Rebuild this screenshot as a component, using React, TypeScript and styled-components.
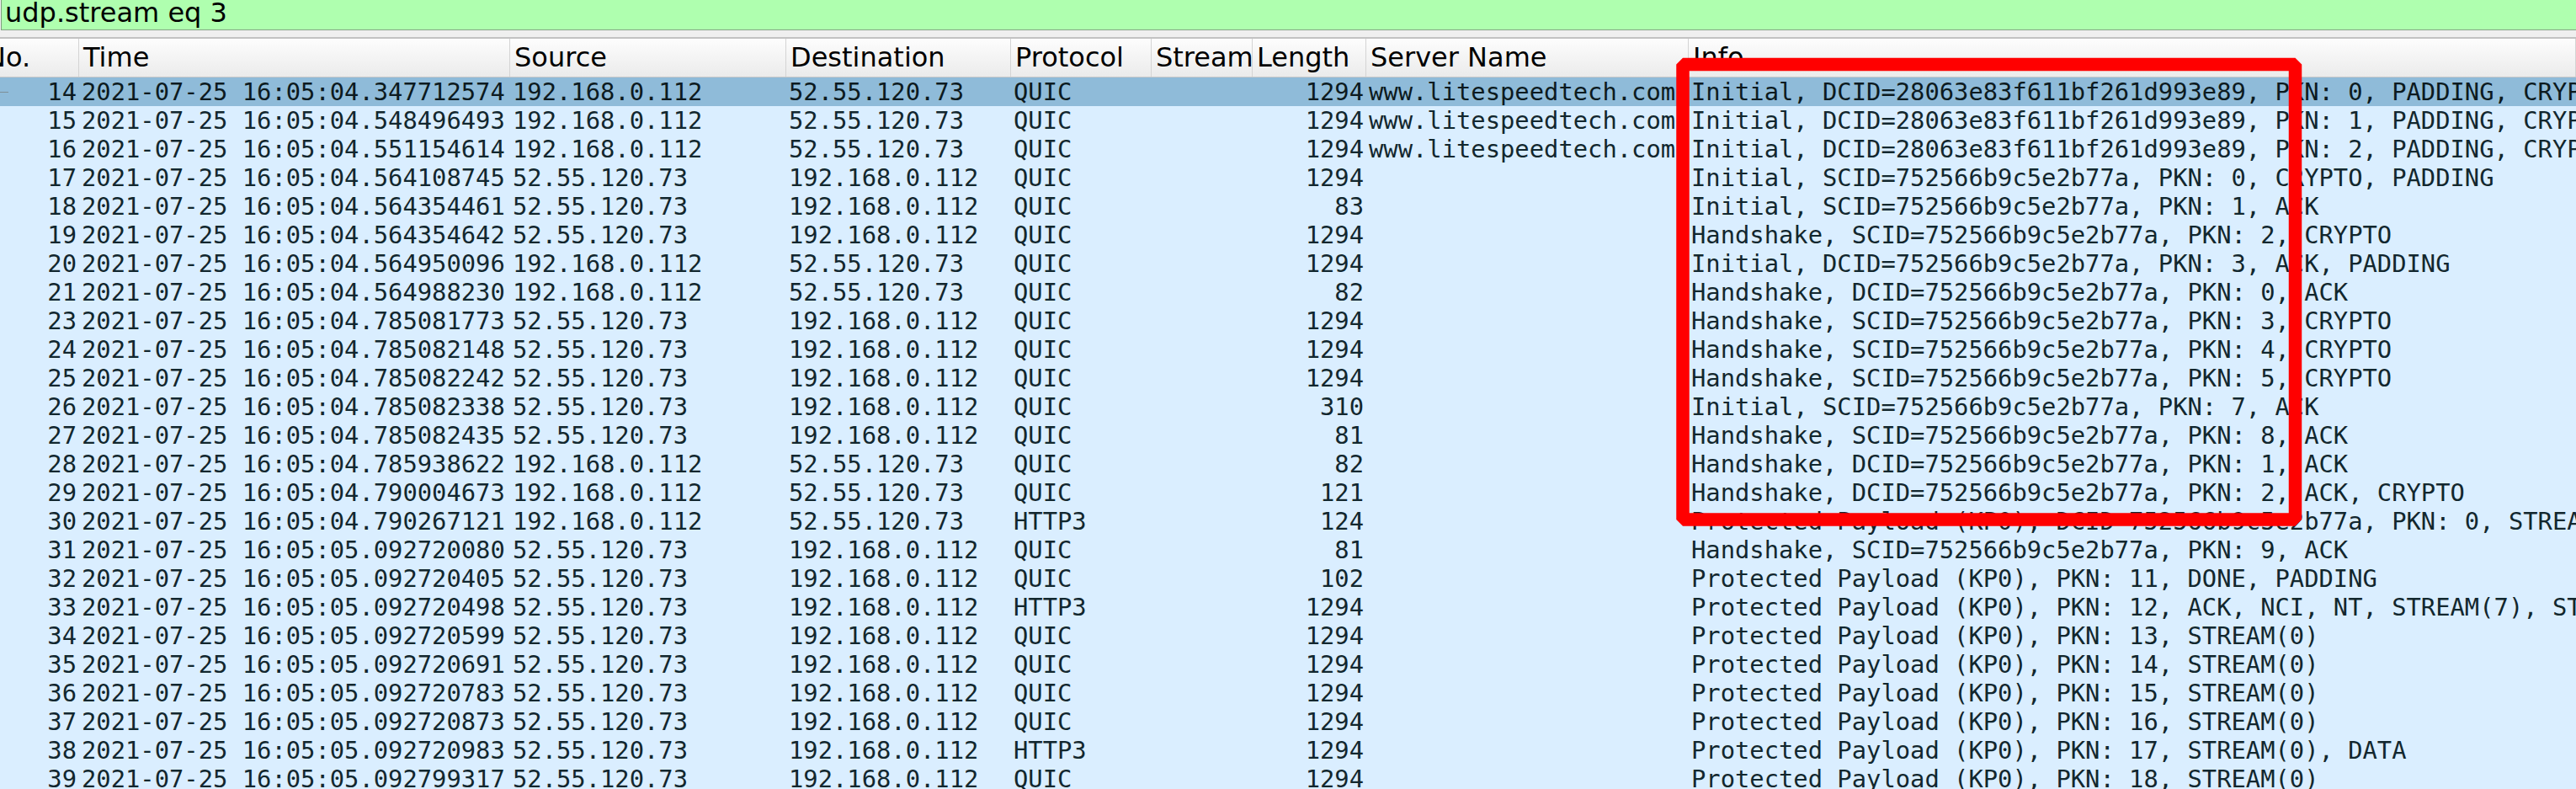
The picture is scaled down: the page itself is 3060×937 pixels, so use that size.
import styled, { createGlobalStyle } from 'styled-components';

interface Packet {
  no: number;
  time: string;
  src: string;
  dst: string;
  proto: string;
  len: number;
  server?: string;
  info: string;
}

const CLIENT = '192.168.0.112';
const PEER = '52.55.120.73';
const SNI = 'www.litespeedtech.com';
const DCID0 = '28063e83f611bf261d993e89';
const CID = '752566b9c5e2b77a';
const KP0 = 'Protected Payload (KP0)';

const out = (no: number, time: string, proto: string, len: number, info: string, server?: string): Packet => ({
  no, time: `2021-07-25 16:05:${time}`, src: CLIENT, dst: PEER, proto, len, info, server,
});
const inc = (no: number, time: string, proto: string, len: number, info: string): Packet => ({
  no, time: `2021-07-25 16:05:${time}`, src: PEER, dst: CLIENT, proto, len, info,
});

const packets: Packet[] = [
  out(14, '04.347712574', 'QUIC', 1294, `Initial, DCID=${DCID0}, PKN: 0, PADDING, CRYPTO`, SNI),
  out(15, '04.548496493', 'QUIC', 1294, `Initial, DCID=${DCID0}, PKN: 1, PADDING, CRYPTO`, SNI),
  out(16, '04.551154614', 'QUIC', 1294, `Initial, DCID=${DCID0}, PKN: 2, PADDING, CRYPTO`, SNI),
  inc(17, '04.564108745', 'QUIC', 1294, `Initial, SCID=${CID}, PKN: 0, CRYPTO, PADDING`),
  inc(18, '04.564354461', 'QUIC', 83, `Initial, SCID=${CID}, PKN: 1, ACK`),
  inc(19, '04.564354642', 'QUIC', 1294, `Handshake, SCID=${CID}, PKN: 2, CRYPTO`),
  out(20, '04.564950096', 'QUIC', 1294, `Initial, DCID=${CID}, PKN: 3, ACK, PADDING`),
  out(21, '04.564988230', 'QUIC', 82, `Handshake, DCID=${CID}, PKN: 0, ACK`),
  inc(23, '04.785081773', 'QUIC', 1294, `Handshake, SCID=${CID}, PKN: 3, CRYPTO`),
  inc(24, '04.785082148', 'QUIC', 1294, `Handshake, SCID=${CID}, PKN: 4, CRYPTO`),
  inc(25, '04.785082242', 'QUIC', 1294, `Handshake, SCID=${CID}, PKN: 5, CRYPTO`),
  inc(26, '04.785082338', 'QUIC', 310, `Initial, SCID=${CID}, PKN: 7, ACK`),
  inc(27, '04.785082435', 'QUIC', 81, `Handshake, SCID=${CID}, PKN: 8, ACK`),
  out(28, '04.785938622', 'QUIC', 82, `Handshake, DCID=${CID}, PKN: 1, ACK`),
  out(29, '04.790004673', 'QUIC', 121, `Handshake, DCID=${CID}, PKN: 2, ACK, CRYPTO`),
  out(30, '04.790267121', 'HTTP3', 124, `${KP0}, DCID=${CID}, PKN: 0, STREAM(2), SETTINGS`),
  inc(31, '05.092720080', 'QUIC', 81, `Handshake, SCID=${CID}, PKN: 9, ACK`),
  inc(32, '05.092720405', 'QUIC', 102, `${KP0}, PKN: 11, DONE, PADDING`),
  inc(33, '05.092720498', 'HTTP3', 1294, `${KP0}, PKN: 12, ACK, NCI, NT, STREAM(7), STREAM(3)`),
  inc(34, '05.092720599', 'QUIC', 1294, `${KP0}, PKN: 13, STREAM(0)`),
  inc(35, '05.092720691', 'QUIC', 1294, `${KP0}, PKN: 14, STREAM(0)`),
  inc(36, '05.092720783', 'QUIC', 1294, `${KP0}, PKN: 15, STREAM(0)`),
  inc(37, '05.092720873', 'QUIC', 1294, `${KP0}, PKN: 16, STREAM(0)`),
  inc(38, '05.092720983', 'HTTP3', 1294, `${KP0}, PKN: 17, STREAM(0), DATA`),
  inc(39, '05.092799317', 'QUIC', 1294, `${KP0}, PKN: 18, STREAM(0)`),
];

// column widths; the list is scrolled so the No. column starts 22px off screen
const COLUMNS = '116px 512px 328px 267px 167px 120px 135px 383px 1fr';

const headers = ['No.', 'Time', 'Source', 'Destination', 'Protocol', 'Stream', 'Length', 'Server Name', 'Info'];

const GlobalStyle = createGlobalStyle`
  html, body {
    margin: 0;
    padding: 0;
    overflow: hidden;
    background: #daeeff;
  }
`;

const Window = styled.div`
  position: relative;
  width: 3060px;
  height: 937px;
  overflow: hidden;
  background: #efefef;
`;

const FilterBar = styled.div`
  height: 35px;
  margin-left: 1px;
  border-left: 1px solid #7f9c7f;
  border-bottom: 1px solid #86a386;
  background: #afffaf;
  padding-left: 4px;
  font-family: "DejaVu Sans", sans-serif;
  font-size: 32px;
  line-height: 31px;
  color: #000;
  white-space: pre;
`;

const Splitter = styled.div`
  height: 8px;
  background: #efefef;
  border-bottom: 2px solid #c2c2c2;
`;

const List = styled.div`
  margin-left: -22px;
  height: 891px;
  background: #daeeff;
  overflow: hidden;
`;

const HeaderRow = styled.div`
  display: grid;
  grid-template-columns: ${COLUMNS};
  height: 45px;
  border-bottom: 1px solid #c9c9c9;
  background: linear-gradient(#fdfdfd, #ebebeb);
`;

const HeaderCell = styled.div`
  padding: 0 5px;
  border-right: 1px solid #d4d4d4;
  font-family: "DejaVu Sans", sans-serif;
  font-size: 32px;
  line-height: 45px;
  color: #000;
  white-space: pre;
  overflow: hidden;
`;

const PacketRow = styled.div<{ $selected?: boolean }>`
  display: grid;
  grid-template-columns: ${COLUMNS};
  height: 34px;
  background: ${(p) => (p.$selected ? '#8fbbd9' : '#daeeff')};
  color: ${(p) => (p.$selected ? '#0c1a20' : '#12272e')};
  font-family: "DejaVu Sans Mono", monospace;
  font-size: 28.8px;
  line-height: 34px;
`;

const Cell = styled.div<{ $right?: boolean }>`
  position: relative;
  padding: 0 3px;
  text-align: ${(p) => (p.$right ? 'right' : 'left')};
  white-space: pre;
  overflow: hidden;
`;

// related-packet marker drawn in the No. column of the selected frame
const RelatedMark = styled.span`
  position: absolute;
  left: 20px;
  top: 17px;
  width: 12px;
  height: 1px;
  background: #7d8f98;
`;

const Annotation = styled.svg`
  position: absolute;
  left: 0;
  top: 0;
  pointer-events: none;
`;

export default function App() {
  return (
    <Window>
      <GlobalStyle />
      <FilterBar>udp.stream eq 3</FilterBar>
      <Splitter />
      <List>
        <HeaderRow>
          {headers.map((h) => (
            <HeaderCell key={h}>{h}</HeaderCell>
          ))}
        </HeaderRow>
        {packets.map((p, i) => (
          <PacketRow key={p.no} $selected={i === 0}>
            <Cell $right>
              {i === 0 && <RelatedMark />}
              {p.no}
            </Cell>
            <Cell>{p.time}</Cell>
            <Cell>{p.src}</Cell>
            <Cell>{p.dst}</Cell>
            <Cell>{p.proto}</Cell>
            <Cell />
            <Cell $right>{p.len}</Cell>
            <Cell>{p.server ?? ''}</Cell>
            <Cell>{p.info}</Cell>
          </PacketRow>
        ))}
      </List>
      <Annotation width="3060" height="937" viewBox="0 0 3060 937">
        <rect
          x="1999"
          y="76.5"
          width="727.5"
          height="540.5"
          fill="none"
          stroke="#ff0000"
          strokeWidth="15.5"
          strokeLinejoin="bevel"
        />
      </Annotation>
    </Window>
  );
}
